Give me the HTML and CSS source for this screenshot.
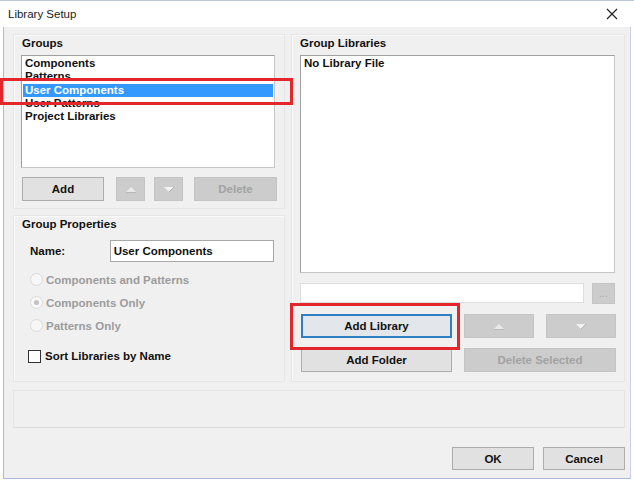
FILE: index.html
```html
<!DOCTYPE html>
<html>
<head>
<meta charset="utf-8">
<link rel="stylesheet" href="styles.css">
</head>
<body>
<div class="window">
  <div class="titlebar">
    <span class="title">Library Setup</span>
    <svg class="close" width="12" height="12" viewBox="0 0 12 12"><path d="M1 1 L11 11 M11 1 L1 11" stroke="#222" stroke-width="1.2" fill="none"/></svg>
  </div>
  <div class="body">
    <div class="main">
      <div class="leftcol">
        <div class="frame groups">
          <div class="flabel">Groups</div>
          <div class="listbox glist">
            <div class="item">Components</div>
            <div class="item">Patterns</div>
            <div class="item sel">User Components</div>
            <div class="item">User Patterns</div>
            <div class="item">Project Libraries</div>
          </div>
          <div class="btnrow">
            <div class="btn b-add">Add</div>
            <div class="btn dis b-up"><svg width="12" height="7" viewBox="0 0 12 7"><polygon points="6,1 11,6 1,6" fill="#e9e9e9"/><line x1="1" y1="6.5" x2="11" y2="6.5" stroke="#b8b8b8"/></svg></div>
            <div class="btn dis b-down"><svg width="12" height="7" viewBox="0 0 12 7"><polygon points="1,1 11,1 6,6" fill="#f2f2f2"/><line x1="6" y1="6" x2="11" y2="1" stroke="#b0b0b0"/></svg></div>
            <div class="btn dis b-del">Delete</div>
          </div>
        </div>
        <div class="frame props">
          <div class="flabel">Group Properties</div>
          <div class="namerow">
            <span class="namelbl">Name:</span>
            <div class="input nameinput">User Components</div>
          </div>
          <div class="radio"><span class="rc"></span><span>Components and Patterns</span></div>
          <div class="radio"><span class="rc on"></span><span>Components Only</span></div>
          <div class="radio"><span class="rc"></span><span>Patterns Only</span></div>
          <div class="check"><span class="cb"></span><span>Sort Libraries by Name</span></div>
        </div>
      </div>
      <div class="frame right">
        <div class="flabel">Group Libraries</div>
        <div class="listbox llist">
          <div class="item">No Library File</div>
        </div>
        <div class="pathrow">
          <div class="input pathinput"></div>
          <div class="btn dis dots">...</div>
        </div>
        <div class="rbrow">
          <div class="btn wide primary">Add Library</div>
          <div class="btn dis arrow"><svg width="12" height="7" viewBox="0 0 12 7"><polygon points="6,1 11,6 1,6" fill="#e9e9e9"/><line x1="1" y1="6.5" x2="11" y2="6.5" stroke="#b8b8b8"/></svg></div>
          <div class="btn dis arrow"><svg width="12" height="7" viewBox="0 0 12 7"><polygon points="1,1 11,1 6,6" fill="#f2f2f2"/><line x1="6" y1="6" x2="11" y2="1" stroke="#b0b0b0"/></svg></div>
        </div>
        <div class="rbrow second">
          <div class="btn wide">Add Folder</div>
          <div class="btn dis delsel">Delete Selected</div>
        </div>
      </div>
    </div>
    <div class="status"></div>
    <div class="footer">
      <div class="btn fbtn">OK</div>
      <div class="btn fbtn">Cancel</div>
    </div>
  </div>
  <div class="redbox rb1"></div>
  <div class="redbox rb2"></div>
</div>
</body>
</html>
```
FILE: styles.css
```css
html, body {
  margin: 0;
  padding: 0;
  background: #ffffff;
}
.window {
  position: relative;
  width: 634px;
  height: 480px;
  box-sizing: border-box;
  border-top: 1px solid #b9c6e0;
  font-family: "Liberation Sans", Arial, sans-serif;
  font-size: 11.5px;
  font-weight: bold;
  color: #111;
  display: flex;
  flex-direction: column;
  overflow: hidden;
}
.titlebar {
  height: 26px;
  background: #fff;
  display: flex;
  align-items: center;
  justify-content: space-between;
  padding: 0 16px 0 8px;
  flex: none;
}
.title {
  font-weight: normal;
  font-size: 11.5px;
  color: #1a1a1a;
}
.close { display: block; }
.body {
  flex: 1;
  background: #f0f0f0;
  margin: 0 3px 1px 3px;
  border-left: 1px solid #a9bbe0;
  border-right: 1px solid #c8d2e6;
  border-bottom: 1px solid #a9bbe0;
  padding: 7px 0 0 9px;
  display: flex;
  flex-direction: column;
}
.main {
  display: flex;
  gap: 6px;
}
.leftcol {
  display: flex;
  flex-direction: column;
  gap: 6px;
  width: 272px;
}
.frame {
  box-sizing: border-box;
  border: 1px solid #e6e6e6;
  box-shadow: inset 1px 1px 0 #fafafa;
  display: flex;
  flex-direction: column;
}
.flabel {
  line-height: 14px;
  margin: 1px 0 0 0;
}
.groups {
  height: 175px;
  padding: 0 9px 0 7px;
}
.groups .flabel { margin-left: 1px; }
.props .flabel { margin-left: -8px; }
.listbox {
  box-sizing: border-box;
  background: #fff;
  border: 1px solid #a0a0a0;
  border-right-color: #c6c6c6;
  border-bottom-color: #c6c6c6;
  padding: 1px 1px 0 1px;
}
.glist {
  margin-top: 5px;
  height: 113px;
}
.item {
  line-height: 13.3px;
  height: 13.3px;
  padding-left: 2px;
  white-space: nowrap;
}
.item.sel {
  background: #3399ff;
  color: #fff;
}
.btn {
  box-sizing: border-box;
  height: 24px;
  background: #e1e1e1;
  border: 1px solid #adadad;
  display: flex;
  align-items: center;
  justify-content: center;
  flex: none;
}
.btn.dis {
  background: #cccccc;
  border-color: #c4c4c4;
  color: #a2a2a2;
}
.btnrow {
  display: flex;
  margin-top: 9px;
  padding-left: 1px;
}
.b-add { width: 82px; }
.b-up { width: 29px; margin-left: 12px; }
.b-down { width: 29px; margin-left: 9px; }
.b-del { width: 83px; margin-left: 11px; }
.props {
  height: 167px;
  padding: 0 10px 0 16px;
}
.namerow {
  display: flex;
  align-items: center;
  margin-top: 9px;
  height: 22px;
}
.namelbl {
  width: 80px;
}
.input {
  box-sizing: border-box;
  background: #fff;
  border: 1px solid #a8a8a8;
}
.nameinput {
  width: 165px;
  height: 22px;
  line-height: 20px;
  padding-left: 3px;
}
.radio {
  display: flex;
  align-items: center;
  height: 23px;
  color: #9c9c9c;
}
.namerow + .radio { margin-top: 6px; }
.rc {
  box-sizing: border-box;
  width: 13px;
  height: 13px;
  border-radius: 50%;
  border: 1px solid #dadada;
  background: #f7f7f7;
  margin: 0 3px 0 0;
  position: relative;
  flex: none;
}
.rc.on::after {
  content: "";
  position: absolute;
  left: 3px;
  top: 3px;
  width: 5px;
  height: 5px;
  border-radius: 50%;
  background: #c2c2c2;
}
.check {
  display: flex;
  align-items: center;
  margin-top: 10px;
  height: 18px;
}
.cb {
  box-sizing: border-box;
  width: 13px;
  height: 13px;
  border: 1px solid #333;
  background: #fff;
  margin: 0 4px 0 -2px;
  flex: none;
}
.right {
  width: 334px;
  height: 348px;
  padding: 0 9px 0 8px;
}
.llist {
  margin-top: 5px;
  height: 218px;
}
.pathrow {
  display: flex;
  margin-top: 10px;
  align-items: flex-start;
}
.pathinput {
  width: 284px;
  height: 20px;
  border-color: #dedede;
}
.dots {
  width: 23px;
  height: 21px;
  margin-left: 8px;
  font-weight: normal;
  font-size: 10px;
  color: #a8a8a8;
}
.rbrow {
  display: flex;
  margin-top: 10px;
  padding-left: 1px;
}
.wide { width: 151px; }
.primary {
  border: 2px solid #2f7fc4;
  background: #e3e6ea;
}
.arrow { width: 70px; margin-left: 12px; }
.delsel { width: 152px; margin-left: 12px; }
.status {
  box-sizing: border-box;
  width: 612px;
  height: 38px;
  margin-top: 8px;
  border: 1px solid #e4e4e4;
  border-bottom-color: #dcdcdc;
}
.footer {
  display: flex;
  justify-content: flex-end;
  gap: 9px;
  margin-top: 19px;
  padding-right: 5px;
}
.fbtn {
  width: 82px;
  height: 23px;
}
.redbox {
  position: absolute;
  box-sizing: border-box;
  border: 3px solid #e3262c;
  pointer-events: none;
}
.rb1 {
  left: 0;
  top: 77px;
  width: 293px;
  height: 27px;
}
.rb2 {
  left: 290px;
  top: 302px;
  width: 170px;
  height: 47px;
}
```
